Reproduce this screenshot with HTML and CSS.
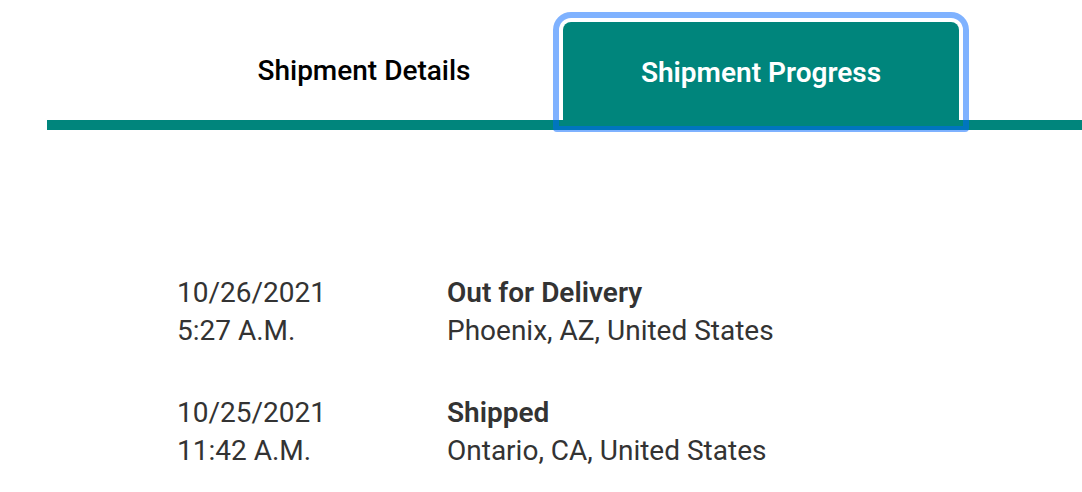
FILE: index.html
```
<!DOCTYPE html>
<html lang="en">
<head>
<meta charset="UTF-8" />
<meta name="viewport" content="width=device-width, initial-scale=1" />
<title>Shipment Progress</title>
<link rel="stylesheet" href="styles.css">
</head>
<body>

<div class="tabs" role="tablist">
  <button type="button" class="tab" role="tab" aria-selected="false">Shipment Details</button>
  <button type="button" class="tab active" role="tab" aria-selected="true">Shipment Progress</button>
</div>

<main>
  <table class="progress">
    <tbody>
      <tr>
        <td>10/26/2021<br>5:27 A.M.</td>
        <td><strong>Out for Delivery</strong><br>Phoenix, AZ, United States</td>
      </tr>
      <tr>
        <td>10/25/2021<br>11:42 A.M.</td>
        <td><strong>Shipped</strong><br>Ontario, CA, United States</td>
      </tr>
    </tbody>
  </table>
</main>

</body>
</html>
```

FILE: styles.css
```
body {
  margin: 0;
  background: #fff;
  color: #333;
  font-family: Roboto, Arial, sans-serif;
  font-size: 28px;
  line-height: 38px;
}
.tabs {
  display: flex;
  align-items: flex-end;
  margin-left: 47px;
  padding: 22px 0 0 118px;
  border-bottom: 10px solid #00857c;
}
.tab {
  position: relative;
  width: 398px;
  height: 98px;
  padding: 0 0 2px;
  border: none;
  border-radius: 8px 8px 0 0;
  background: none;
  color: #000;
  font-family: inherit;
  font-size: 28px;
  font-weight: 500;
  cursor: pointer;
}
.tab.active {
  width: 396px;
  padding: 2px 0 0;
  background: #00857c;
  color: #fff;
  font-weight: 600;
}
/* focus ring, lies over the bar below */
.tab.active::after {
  content: "";
  position: absolute;
  top: -10px;
  right: -10px;
  bottom: -12px;
  left: -10px;
  border: 6px solid rgba(0, 101, 255, 0.5);
  border-radius: 18px 18px 4px 4px;
}
main {
  padding: 144px 0 0 177px;
}
.progress {
  border-collapse: collapse;
}
.progress td {
  padding: 0 0 44px;
  vertical-align: top;
}
.progress td:first-child {
  width: 270px;
}
.progress strong {
  font-weight: 600;
}
```
